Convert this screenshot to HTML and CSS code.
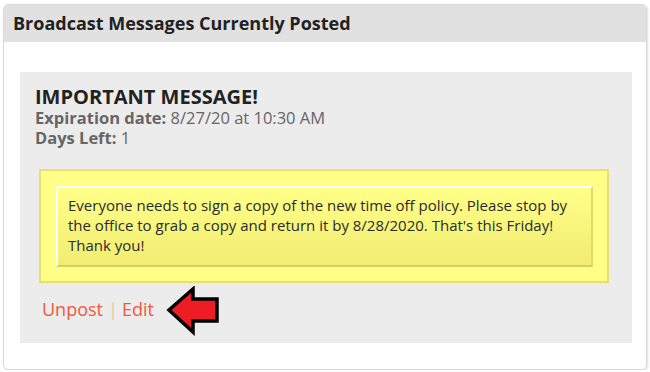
FILE: index.html
```html
<!DOCTYPE html>
<html>
<head>
<meta charset="utf-8">
<link rel="stylesheet" href="styles.css">
</head>
<body>
<div class="panel">
  <div class="panel-header">Broadcast Messages Currently Posted</div>
  <div class="panel-body">
    <div class="message">
      <div class="msg-title">IMPORTANT MESSAGE!</div>
      <div class="msg-meta"><b>Expiration date:</b> 8/27/20 at 10:30 AM</div>
      <div class="msg-meta"><b>Days Left:</b> 1</div>
      <div class="note">
        <div class="note-inner">Everyone needs to sign a copy of the new time off policy. Please stop by the office to grab a copy and return it by 8/28/2020. That's this Friday! Thank you!</div>
      </div>
      <div class="actions">
        <a class="link">Unpost</a><span class="sep">|</span><a class="link">Edit</a>
        <svg class="arrow" width="56" height="50" viewBox="0 0 56 50">
          <polygon points="3,24 27,3 27,13 51,13 51,35 27,35 27,46" fill="#ee1c24" stroke="#000" stroke-width="3.5" stroke-linejoin="miter"/>
        </svg>
      </div>
    </div>
  </div>
</div>
</body>
</html>
```
FILE: styles.css
```css
html, body {
  margin: 0;
  padding: 0;
  background: #fff;
}
body {
  font-family: "Open Sans", "Liberation Sans", sans-serif;
}
.panel {
  margin: 4px 0 0 3px;
  width: 642px;
  border: 1px solid #d8d8d8;
  border-radius: 5px;
  box-shadow: 1px 1px 2px rgba(0,0,0,0.12);
  overflow: hidden;
}
.panel-header {
  height: 37px;
  background: #e1e1e1;
  padding-left: 9px;
  font-size: 18px;
  font-weight: 700;
  color: #222;
  line-height: 37px;
}
.panel-body {
  padding: 30px 14px 26px 16px;
}
.message {
  background: #ececec;
  padding: 14px 23px 22px 15px;
}
.msg-title {
  font-size: 20px;
  font-weight: 700;
  line-height: 22px;
  color: #222;
}
.msg-meta {
  font-size: 16.5px;
  line-height: 20px;
  color: #666;
}
.msg-meta b {
  font-weight: 700;
}
.note {
  margin: 21px 0 0 4px;
  background: #ffff88;
  border: 2px solid #e9df6e;
  padding: 15px 14px 14px 15px;
}
.note-inner {
  border-top: 2px solid #fff;
  border-left: 2px solid #fff;
  border-right: 2px solid #e4d868;
  border-bottom: 2px solid #d9cc5e;
  background: linear-gradient(#ffff88, #f2ec72);
  padding: 7px 14px 10px 10px;
  font-size: 15px;
  line-height: 20px;
  color: #2b2b2b;
}
.actions {
  position: relative;
  margin: 14px 0 0 7px;
  font-size: 18px;
  line-height: 24px;
}
.link {
  color: #f1583c;
}
.sep {
  color: #dccb9e;
  margin: 0 4px 0 5px;
}
.arrow {
  position: absolute;
  left: 124px;
  top: -11px;
}
```
